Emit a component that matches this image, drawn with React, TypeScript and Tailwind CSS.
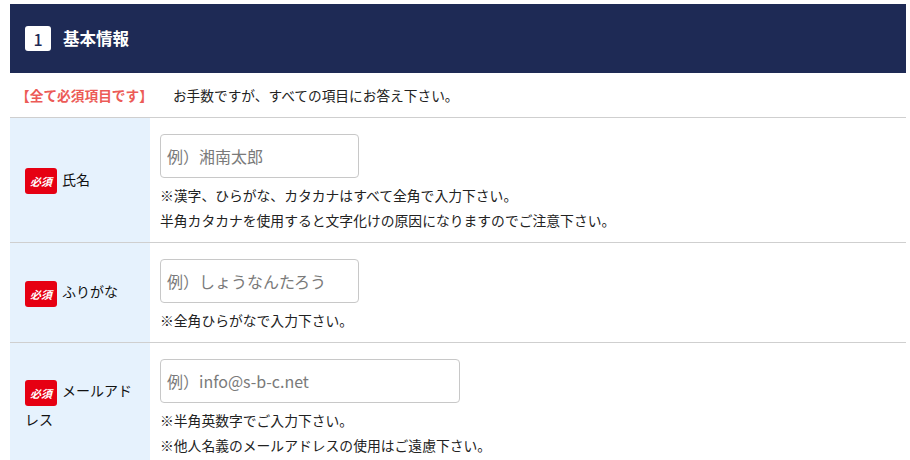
export default function App() {
  const rows = [
    {
      label: '氏名',
      placeholder: '例）湘南太郎',
      wide: false,
      notes: ['※漢字、ひらがな、カタカナはすべて全角で入力下さい。', '半角カタカナを使用すると文字化けの原因になりますのでご注意下さい。'],
    },
    {
      label: 'ふりがな',
      placeholder: '例）しょうなんたろう',
      wide: false,
      notes: ['※全角ひらがなで入力下さい。'],
    },
    {
      label: 'メールアドレス',
      placeholder: '例）info@s-b-c.net',
      wide: true,
      notes: ['※半角英数字でご入力下さい。', '※他人名義のメールアドレスの使用はご遠慮下さい。'],
    },
  ];

  return (
    <div
      className="w-[910px] h-[460px] overflow-hidden bg-white pt-1 pl-[10px] pr-1 text-[#222]"
      style={{ fontFamily: '"Noto Sans CJK JP", "Noto Sans", sans-serif' }}
    >
      <div className="w-[896px]">
        <div className="h-[69px] bg-[#1e2a55] flex items-center pl-[15px]">
          <span className="w-[26px] h-[25px] bg-white rounded-[3px] flex items-center justify-center text-[16px] font-medium text-[#1e2a55]">
            1
          </span>
          <span className="ml-[12px] text-[16.5px] font-bold text-white">基本情報</span>
        </div>

        <div className="h-[45px] flex items-center border-b border-[#cfcfcf] text-[13.7px]">
          <span className="ml-[6px] font-bold text-[#ec5b57]">【全て必須項目です】</span>
          <span className="ml-[20px]">お手数ですが、すべての項目にお答え下さい。</span>
        </div>

        {rows.map((r) => (
          <div key={r.label} className="flex border-b border-[#cfcfcf]">
            <div className="w-[140px] shrink-0 bg-[#e6f2fd] flex items-center px-[15px] text-[14px] leading-[27px] text-[#111]">
              <div>
                <span className="inline-block align-middle w-[32px] h-[26px] leading-[26px] rounded-[3px] bg-[#e60012] text-white text-[11px] font-bold italic text-center mr-[5px]">
                  必須
                </span>
                {r.label}
              </div>
            </div>
            <div className="flex-1 border-l-2 border-white pl-[8px] pt-[16px] pb-[9px]">
              <div
                className={`${r.wide ? 'w-[300px]' : 'w-[199px]'} h-[44px] border border-[#c8c8c8] rounded-[4px] flex items-center pl-[6px] text-[16px] text-[#7a7a7a]`}
              >
                {r.placeholder}
              </div>
              <div className="mt-[5px] text-[13.8px] leading-[25px]">
                {r.notes.map((n) => (
                  <p key={n}>{n}</p>
                ))}
              </div>
            </div>
          </div>
        ))}
      </div>
    </div>
  );
}
